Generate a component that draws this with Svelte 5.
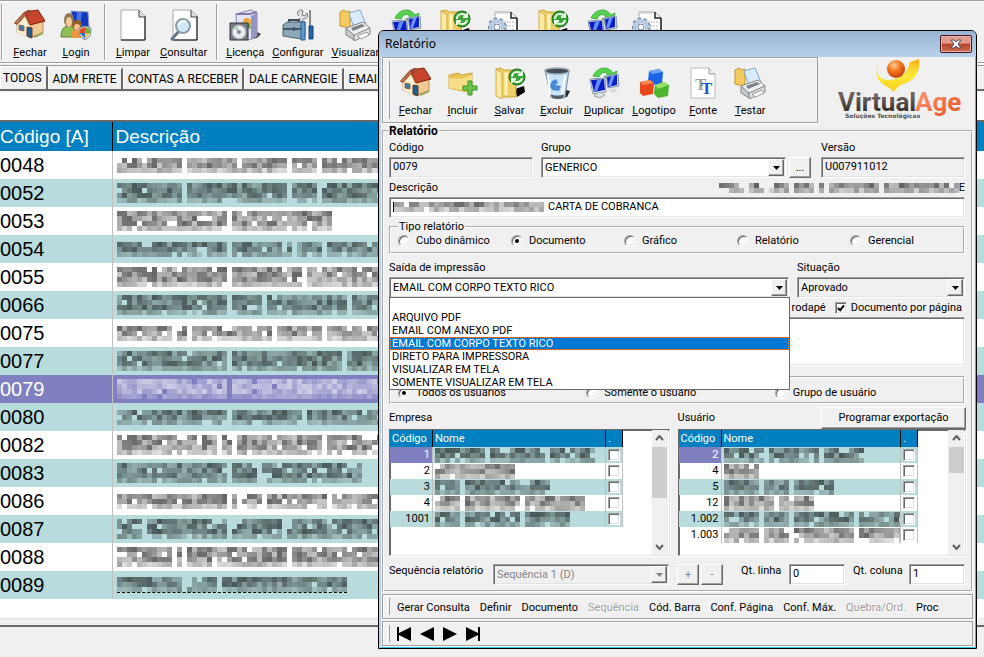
<script lang="ts">
	type Tool = { icon: string; label?: string; wide?: boolean };
	type Row = { code: string; words: number[] };

	const mainTools: Tool[][] = [
		[
			{ icon: 'house', label: 'Fechar' },
			{ icon: 'users', label: 'Login' }
		],
		[
			{ icon: 'page', label: 'Limpar' },
			{ icon: 'search', label: 'Consultar' }
		],
		[
			{ icon: 'package', label: 'Licença' },
			{ icon: 'toolbox', label: 'Configurar' },
			{ icon: 'printer', label: 'Visualizar' },
			{ icon: 'sync' },
			{ icon: 'folder', wide: true },
			{ icon: 'gear' },
			{ icon: 'folder', wide: true },
			{ icon: 'sync' },
			{ icon: 'gear' }
		]
	];

	const dialogTools: Tool[] = [
		{ icon: 'house', label: 'Fechar' },
		{ icon: 'add', label: 'Incluir' },
		{ icon: 'folder', label: 'Salvar' },
		{ icon: 'trash', label: 'Excluir' },
		{ icon: 'sync', label: 'Duplicar' },
		{ icon: 'cubes', label: 'Logotipo' },
		{ icon: 'font', label: 'Fonte' },
		{ icon: 'printer', label: 'Testar' }
	];

	const tabs = ['TODOS', 'ADM FRETE', 'CONTAS A RECEBER', 'DALE CARNEGIE', 'EMAIL'];

	// words holds the length of each masked word, in mosaic cells
	const reports: Row[] = [
		{ code: '0048', words: [13, 20, 5, 14] },
		{ code: '0052', words: [13, 20, 5, 14] },
		{ code: '0053', words: [22, 20] },
		{ code: '0054', words: [22, 12, 5, 13] },
		{ code: '0055', words: [22, 14, 16] },
		{ code: '0066', words: [22, 6, 16, 8] },
		{ code: '0075', words: [11, 2, 16, 9, 12] },
		{ code: '0077', words: [22, 22, 8] },
		{ code: '0079', words: [22, 31] },
		{ code: '0080', words: [22, 14, 16] },
		{ code: '0082', words: [20, 2, 17, 12] },
		{ code: '0083', words: [22, 5, 20] },
		{ code: '0086', words: [22, 6, 12, 12] },
		{ code: '0087', words: [5, 16, 10, 21] },
		{ code: '0088', words: [11, 1, 20, 19] },
		{ code: '0089', words: [13, 6, 25] }
	];

	const companies: Row[] = [
		{ code: '1', words: [10, 11, 9] },
		{ code: '2', words: [16] },
		{ code: '3', words: [5, 17] },
		{ code: '4', words: [5, 11, 12] },
		{ code: '1001', words: [5, 11, 9] }
	];

	const users: Row[] = [
		{ code: '2', words: [8, 10, 8] },
		{ code: '4', words: [7] },
		{ code: '5', words: [7, 5, 8] },
		{ code: '12', words: [10, 7] },
		{ code: '1.002', words: [7, 5, 12, 10] },
		{ code: '1.003', words: [7, 5, 12, 10] }
	];

	const outputs = [
		'',
		'ARQUIVO PDF',
		'EMAIL COM ANEXO PDF',
		'EMAIL COM CORPO TEXTO RICO',
		'DIRETO PARA IMPRESSORA',
		'VISUALIZAR EM TELA',
		'SOMENTE VISUALIZAR EM TELA'
	];

	const kinds = ['Cubo dinâmico', 'Documento', 'Gráfico', 'Relatório', 'Gerencial'];
	const scopes = ['Todos os usuários', 'Somente o usuário', 'Grupo de usuário'];

	const actions = [
		{ label: 'Gerar Consulta' },
		{ label: 'Definir' },
		{ label: 'Documento' },
		{ label: 'Sequência', disabled: true },
		{ label: 'Cód. Barra' },
		{ label: 'Conf. Página' },
		{ label: 'Conf. Máx.' },
		{ label: 'Quebra/Ord.', disabled: true },
		{ label: 'Proc' }
	];

	const moves = [
		{ label: 'Primeiro', path: 'M0 0h2v6L14 0v14L2 8v6H0z' },
		{ label: 'Anterior', path: 'M14 0v14L0 7z' },
		{ label: 'Próximo', path: 'M0 0v14l14-7z' },
		{ label: 'Último', path: 'M14 0h-2v6L0 0v14l12-6v6h2z' }
	];

	let output = $state('EMAIL COM CORPO TEXTO RICO');
	let kind = $state('Documento');
	let scope = $state('Todos os usuários');

	const noise = (n: number) => {
		const v = Math.sin(n * 12.9898) * 43758.5453;
		return v - Math.floor(v);
	};

	function mosaicCells(words: number[], rows: number, seed: number) {
		const cells: { x: number; y: number; o: number }[] = [];
		let col = 0;
		for (const length of words) {
			for (let i = 0; i < length; i++, col++) {
				for (let r = 0; r < rows; r++) {
					const n = noise(seed * 97 + col * 7 + r * 31 + 1);
					const edge = r === rows - 1 ? 0.6 : 1;
					cells.push({ x: col * 5, y: r * 5, o: n < 0.08 ? 0 : (0.18 + n * 0.42) * edge });
				}
			}
			col++;
		}
		return { cells, width: (col - 1) * 5 };
	}
</script>

{#snippet mosaic(words: number[], rows: number, seed: number)}
	{@const m = mosaicCells(words, rows, seed)}
	<svg class="mosaic" width={m.width} height={rows * 5} shape-rendering="crispEdges" aria-hidden="true">
		{#each m.cells as c}
			<rect x={c.x} y={c.y} width="5" height="5" fill="currentColor" opacity={c.o} />
		{/each}
	</svg>
{/snippet}

{#snippet icon(name: string)}
	<svg width="32" height="32" viewBox="0 0 32 32" aria-hidden="true">
		{#if name === 'house'}
			<path d="M3 14 11 4 15 13v15L3 23z" fill="#fbe3bd" stroke="#a9814f" stroke-width=".8" />
			<path d="M14 14 29 12v12l-14 5z" fill="#f1c993" stroke="#a9814f" stroke-width=".8" />
			<path d="M3 14 12 5l4 9-2 14L3 23z" fill="#fff0d4" />
			<path d="M11 3 24 1l7 11-15 4z" fill="#c8442a" stroke="#7d2413" />
			<path d="m11 3-10 11 2 1 8-9 5 10" fill="none" stroke="#a95330" stroke-width="1.6" />
			<path d="M13 1h4v5h-4z" fill="#a34a35" />
			<path d="M13 18l5 1v10l-5-2z" fill="#245f92" stroke="#5d3920" />
			<path d="M5 16l5 1v5l-5-1z" fill="#417ba4" stroke="#8b6b45" />
			<path d="m20 28 9-4" stroke="#9aa35e" stroke-width="2" />
		{:else if name === 'users'}
			<path d="M11 2l17 1 1 16-15 2z" fill="#1439c0" stroke="#8b9bc4" />
			<path d="m17 3 5 0-2 16h-4z" fill="#6c9cf2" opacity=".6" />
			<path d="M1 28c0-8 3-11 8-11s7 4 7 11z" fill="#8fbd53" stroke="#608232" />
			<ellipse cx="9" cy="11" rx="5" ry="7" fill="#8d7951" />
			<ellipse cx="9" cy="13" rx="3" ry="5" fill="#f5c99b" />
			<path d="M11 29c0-6 2-9 7-9s6 3 6 9z" fill="#ef973f" />
			<circle cx="17" cy="16" r="5" fill="#985c25" />
			<circle cx="17" cy="18" r="3" fill="#f7c18f" />
			<path d="M25 17l6 2c0 6-1 9-6 12-5-3-6-6-6-12z" fill="#e9edf1" stroke="#778596" />
			<path d="M20 20l5-2v6h-5z" fill="#dd4b2d" />
			<path d="M25 18l5 2v4h-5z" fill="#6eb132" />
			<path d="M20 24h5v6z" fill="#2c72cf" />
			<path d="M25 24h5l-5 6z" fill="#f5c930" />
		{:else if name === 'page'}
			<path d="M4 1h18l6 6v24H4z" fill="#fff" stroke="#aaa" />
			<path d="M28 7v24H4" fill="none" stroke="#000" />
			<path d="M22 1v7h6" fill="#ddd" stroke="#444" />
		{:else if name === 'search'}
			<path d="M5 1h18l6 6v24H5z" fill="#fff" stroke="#aaa" />
			<path d="M29 7v24H5" fill="none" stroke="#000" />
			<path d="M23 1v7h6" fill="#ddd" stroke="#444" />
			<path d="m11 22-7 8" stroke="#657487" stroke-width="3" stroke-linecap="round" />
			<circle cx="15" cy="17" r="7" fill="#cfe9fb" stroke="#8a9aac" stroke-width="2" />
			<path d="M11 16c1-4 5-5 7-3" fill="none" stroke="#fff" stroke-width="2" />
		{:else if name === 'package'}
			<path d="m28 23 4 2-4 4-7 1z" fill="#3a3a42" />
			<path d="m7 5 15-4 6 3v23l-8 4L8 28z" fill="#e4e4f4" stroke="#8585ab" />
			<path d="m22 7 6-3v23l-6 4z" fill="#9696c4" />
			<path d="M7 5h14l7-2" fill="none" stroke="#7d7da8" stroke-width="2" />
			<circle cx="18" cy="13" r="4" fill="#f1a63a" />
			<path d="m14 17 7-3 1 6z" fill="#5aa443" />
			<path d="M1 14h18v17H1z" fill="#787c84" stroke="#303238" />
			<circle cx="10" cy="23" r="7" fill="#e9ecee" stroke="#a0a4aa" />
			<path d="M10 23 4 19l4-3z" fill="#abd6ba" />
			<circle cx="10" cy="23" r="2" fill="#888" />
		{:else if name === 'toolbox'}
			<path d="M17 7c-4-4 1-8 4-5l-1 4 3 1 2-3c2 5-2 6-4 6l-4 8-4-2 5-7" fill="#dfe0e3" stroke="#777" />
			<path d="M28 1v16" stroke="#888" stroke-width="2" />
			<path d="M7 15v-4h10v4" fill="none" stroke="#424d58" stroke-width="2" />
			<path d="m1 16 4-3h18v15l-4 2-18-3z" fill="#8da7b9" stroke="#4d6475" />
			<path d="M1 20h20M12 18v4" stroke="#405465" stroke-width="2" />
			<path d="M19 13h4v18h-4z" fill="#5f9bd0" stroke="#305b86" />
			<path d="M27 17h4v13h-4z" fill="#2766a5" stroke="#174672" />
		{:else if name === 'printer'}
			<path d="m1 3 4-2 3 2 3-1v17l-10-2z" fill="#f6cb5d" stroke="#c39535" />
			<path d="M10 4 21 1l6 14-12 4z" fill="#d7edff" stroke="#88a6c5" />
			<path d="m7 19 17-6 7 6-16 8z" fill="#eceef0" stroke="#808489" />
			<path d="m7 19 8 7v5l-8-5z" fill="#c4c9cd" stroke="#888" />
			<path d="m15 26 16-7v6l-16 7z" fill="#dfe2e4" stroke="#888" />
			<path d="m12 19 11-4 3 2-12 5z" fill="#7b8187" />
			<path d="m18 27 10-4 2 3-8 4z" fill="#fff" stroke="#999" />
		{:else if name === 'sync'}
			<path d="M5 9C9 0 20-2 25 6l4-2-3 10-10-4 4-2c-3-4-7-3-9 2z" fill="#55d34f" stroke="#35a333" stroke-width=".8" />
			<path d="m18 9 12-2 1 12-11 2z" fill="#d7dee7" stroke="#8795a6" />
			<path d="m19 10 10-2v10l-9 2z" fill="#0b1fcc" />
			<path d="m23 9 4-1-4 11h-3z" fill="#6b92ff" />
			<path d="m25 21 5 2-5 3-4-2z" fill="#d3dae0" />
			<path d="m2 12 15-1 1 14-13 2z" fill="#e6edf4" stroke="#8795a6" />
			<path d="m3 13 13-1 1 11-11 2z" fill="#0a1cc4" />
			<path d="m9 13 5-1-5 12H6z" fill="#638dff" />
			<path d="m9 26 4-1 4 3-5 3-6-2z" fill="#dae1e6" stroke="#9aa5ae" />
		{:else if name === 'folder'}
			<path d="m21 22 9-3 1 6-8 5z" fill="#000" />
			<path d="m2 2 5-1 3 2h12v27H8z" fill="#efcf65" stroke="#c7a33a" />
			<path d="M2 2v27l6 3V6z" fill="#fbeaa1" stroke="#d0ae48" />
			<path d="M12 5v23" stroke="#fff4be" stroke-width="3" />
			<circle cx="23" cy="10" r="8" fill="#3aa536" stroke="#176b1b" />
			<path d="M18 10c0-6 7-6 9-3m1-3v4h-4M28 11c-1 5-7 5-9 2m-1 3v-4h4" fill="none" stroke="#e9ffe5" stroke-width="2" />
		{:else if name === 'gear'}
			<path d="M7 3h16l6 6v23H7z" fill="#fff" stroke="#aaa" />
			<path d="M29 9v23M23 3v6h6" fill="none" stroke="#222" stroke-width="1.5" />
			<path d="M9 4h13M15 13h12M18 17h9M18 21h9" stroke="#aab5c3" stroke-dasharray="2 1" />
			<circle cx="9" cy="18" r="7" fill="none" stroke="#7793b1" stroke-width="5" stroke-dasharray="3 2" />
			<circle cx="9" cy="18" r="6" fill="none" stroke="#b4cbe0" stroke-width="4" />
			<circle cx="9" cy="18" r="3" fill="#fff" stroke="#6b87a7" />
		{:else if name === 'add'}
			<path d="m2 8 10-2 2 2 11-2v20L2 21z" fill="#e8c455" stroke="#d0a83c" />
			<path d="m2 11 12 1 11-4v17L2 21z" fill="#f7df86" />
			<path d="M21 14h4v5h5v4h-5v5h-4v-5h-5v-4h5z" fill="#67c54a" stroke="#38912b" />
		{:else if name === 'trash'}
			<path d="m25 23 4 1-3 6-9 1z" fill="#222" />
			<path d="m4 3 24 0-4 27c-3 2-11 2-14 0z" fill="#c8e2f7" stroke="#6c87a2" />
			<ellipse cx="16" cy="4" rx="12" ry="3" fill="#434c57" stroke="#9baab9" stroke-width="1.5" />
			<path d="m7 8 2 20M24 8l-3 20" stroke="#fff" stroke-width="2" />
			<path d="m11 14 4-2 2 4-3 2 6 1-2 5-7-1-2-4z" fill="#4889d4" />
			<path d="M10 27c3 2 9 2 13 0l-1 4c-3 1-8 1-11 0z" fill="#555f69" />
		{:else if name === 'cubes'}
			<path d="m11 4 10-2 4 3-1 12-11 1-3-3z" fill="#1a62e6" />
			<path d="m11 4 10-2 4 3-11 2z" fill="#6ba5ff" />
			<path d="m2 15 10-2 4 3-1 11-10 2-3-3z" fill="#e9461d" />
			<path d="m2 15 10-2 4 3-11 2z" fill="#ff8a52" />
			<path d="m17 18 9-3 5 3-1 11-10 2-4-4z" fill="#4bb52c" />
			<path d="m17 18 9-3 5 3-11 4z" fill="#97e369" />
		{:else}
			<path d="M4 1h18l6 6v24H4z" fill="#fff" stroke="#bbb" />
			<path d="M22 1v6h6" fill="#eee" stroke="#999" />
			<text class="glyph" x="8" y="23" fill="#a0a0a0">T</text>
			<text class="glyph" x="14" y="27" fill="#2355c4">T</text>
		{/if}
	</svg>
{/snippet}

{#snippet toolButton(tool: Tool)}
	<button class="tool" class:tool--wide={tool.wide} aria-label={tool.label ?? tool.icon}>
		{@render icon(tool.icon)}
		{#if tool.label}
			<span><u>{tool.label[0]}</u>{tool.label.slice(1)}</span>
		{/if}
	</button>
{/snippet}

{#snippet arrow()}
	<span class="arrow" aria-hidden="true">
		<svg width="7" height="4" viewBox="0 0 7 4"><path d="M0 0h7L3.500 4z" fill="currentColor" /></svg>
	</span>
{/snippet}

{#snippet listGrid(title: string, rows: Row[], seed: number)}
	<div class="list">
		<table class="list__table" aria-label={title}>
			<thead>
				<tr><th class="list__code">Código</th><th>Nome</th><th class="list__check">.</th></tr>
			</thead>
			<tbody>
				{#each rows as row, i}
					<tr>
						<td class="list__code" class:selected={i === 0}>{row.code}</td>
						<td>{@render mosaic(row.words, 3, seed + i)}</td>
						<td class="list__check"><input type="checkbox" aria-label={`${title} ${row.code}`} /></td>
					</tr>
				{/each}
			</tbody>
		</table>
		<div class="scroll" class:scroll--short={rows.length > 5} aria-hidden="true">
			<svg width="9" height="6" viewBox="0 0 9 6"><path d="m1 5 3.500-4L8 5" /></svg>
			<i></i>
			<svg width="9" height="6" viewBox="0 0 9 6"><path d="m1 1 3.500 4L8 1" /></svg>
		</div>
	</div>
{/snippet}

<main class="desktop">
	<div class="toolbar" role="toolbar" aria-label="Principal">
		{#each mainTools as group}
			<div class="toolbar__group">
				{#each group as tool}{@render toolButton(tool)}{/each}
			</div>
		{/each}
	</div>

	<div class="tabs" role="tablist">
		{#each tabs as tab, i}
			<button class="tab" class:tab--active={i === 0} role="tab" aria-selected={i === 0}>{tab}</button>
		{/each}
	</div>

	<div class="sheet">
		<table class="reports">
			<thead>
				<tr><th class="reports__code">Código [A]</th><th>Descrição</th></tr>
			</thead>
			<tbody>
				{#each reports as row, i}
					<tr class:selected={row.code === '0079'}>
						<td class="reports__code">{row.code}</td>
						<td class:cut={i === reports.length - 1}>{@render mosaic(row.words, i % 3 === 0 ? 3 : 4, i + 1)}</td>
					</tr>
				{/each}
			</tbody>
		</table>
	</div>
</main>

<div class="window" role="dialog" aria-labelledby="window-title">
	<header class="titlebar">
		<h1 id="window-title">Relatório</h1>
		<button class="close" aria-label="Sair">
			<svg width="12" height="10" viewBox="0 0 12 10">
				<path d="M1 1h3l2 2 2-2h3L8 5l3 4H8L6 7 4 9H1l3-4z" fill="#fff" stroke="#4d4f5d" />
			</svg>
		</button>
	</header>

	<div class="top">
		<div class="panel top__tools" role="toolbar" aria-label="Relatório">
			<i class="grip"></i>
			{#each dialogTools as tool}{@render toolButton(tool)}{/each}
		</div>
		<svg class="brand" width="150" height="65" viewBox="4 0 150 65" role="img" aria-label="VirtualAge">
			<defs>
				<radialGradient id="ball" cx=".4" cy=".3" r=".7">
					<stop offset="0" stop-color="#ffd29a" />
					<stop offset=".45" stop-color="#f47b20" />
					<stop offset="1" stop-color="#c53d08" />
				</radialGradient>
				<linearGradient id="swoosh" x2="0" y2="1">
					<stop offset="0" stop-color="#f9b21b" />
					<stop offset=".5" stop-color="#ffe93b" />
					<stop offset="1" stop-color="#f6cf1c" />
				</linearGradient>
				<linearGradient id="age" x2="1" y2="1">
					<stop offset="0" stop-color="#ff9f84" />
					<stop offset="1" stop-color="#e8521a" />
				</linearGradient>
				<linearGradient id="virtual" x2="0" y2="1">
					<stop offset=".3" stop-color="#6d6260" />
					<stop offset="1" stop-color="#231d1c" />
				</linearGradient>
			</defs>
			<path d="M60 8c-4 8 0 15 9 15 12 0 19-6 22-18l9-3c2 13-5 21-13 24-6 2-9 4-12 9-4-5-13-7-16-13-2-5-2-10 1-14z" fill="url(#swoosh)" />
			<circle cx="77" cy="12" r="9" fill="url(#ball)" />
			<text x="19" y="54" class="brand__name" fill="url(#virtual)">Virtual</text>
			<text x="96" y="54" class="brand__name" fill="url(#age)">Age</text>
			<text x="26" y="61" class="brand__tag">Soluções Tecnológicas</text>
		</svg>
	</div>

	<fieldset class="group form">
		<legend><b>Relatório</b></legend>

		<div class="row">
			<div class="field w144">
				<label for="code">Código</label>
				<input id="code" class="box box--flat" value="0079" readonly />
			</div>
			<div class="field grow">
				<label for="group">Grupo</label>
				<div class="pick">
					<div class="combo grow">
						<select id="group" class="box"><option>GENERICO</option></select>
						{@render arrow()}
					</div>
					<button class="btn btn--small">...</button>
				</div>
			</div>
			<div class="field w144">
				<label for="version">Versão</label>
				<input id="version" class="box box--flat" value="U007911012" readonly />
			</div>
		</div>

		<div class="field">
			<div class="caption">
				<label for="description">Descrição</label>
				<span class="caption__path">{@render mosaic([5, 8, 4, 1, 10, 15], 2, 40)}E</span>
			</div>
			<div class="masked">
				<input id="description" class="box" value="CARTA DE COBRANCA" />
				<span class="masked__start">{@render mosaic([30], 2, 53)}</span>
			</div>
		</div>

		<fieldset class="group radios radios--kind">
			<legend>Tipo relatório</legend>
			{#each kinds as k}
				<label><input type="radio" name="kind" value={k} bind:group={kind} />{k}</label>
			{/each}
		</fieldset>

		<div class="row outputs">
			<div class="field grow">
				<label for="output">Saída de impressão</label>
				<div class="combo">
					<select id="output" class="box" bind:value={output}>
						{#each outputs as o}<option>{o}</option>{/each}
					</select>
					{@render arrow()}
					<ul class="menu" role="listbox" aria-label="Saída de impressão">
						{#each outputs as o}
							<li role="option" aria-selected={o === output} class:current={o === output}>{o}</li>
						{/each}
					</ul>
				</div>
			</div>
			<div class="field w168">
				<label for="status">Situação</label>
				<div class="combo">
					<select id="status" class="box box--flat"><option>Aprovado</option></select>
					{@render arrow()}
				</div>
			</div>
		</div>

		<div class="checks">
			<label><input type="checkbox" />Imprimir rodapé</label>
			<label><input type="checkbox" checked />Documento por página</label>
		</div>

		<textarea class="box memo" aria-label="Observação"></textarea>

		<fieldset class="group radios radios--scope" aria-label="Usuários">
			{#each scopes as s}
				<label><input type="radio" name="scope" value={s} bind:group={scope} />{s}</label>
			{/each}
		</fieldset>

		<div class="lists">
			<section>
				<div class="lists__head">Empresa</div>
				{@render listGrid('Empresa', companies, 60)}
			</section>
			<section>
				<div class="lists__head">Usuário <button class="btn btn--export">Programar exportação</button></div>
				{@render listGrid('Usuário', users, 80)}
			</section>
		</div>

		<div class="sequence">
			<label for="sequence">Sequência relatório</label>
			<div class="combo combo--off">
				<select id="sequence" class="box box--flat" disabled><option>Sequência 1 (D)</option></select>
				{@render arrow()}
			</div>
			<div class="sequence__buttons">
				<button class="btn btn--small" disabled>+</button>
				<button class="btn btn--small" disabled>-</button>
			</div>
			<label for="lines">Qt. linha</label>
			<input id="lines" class="box" value="0" />
			<label class="sequence__next" for="columns">Qt. coluna</label>
			<input id="columns" class="box" value="1" />
		</div>
	</fieldset>

	<div class="panel actions">
		<i class="grip"></i>
		{#each actions as a}
			<button disabled={a.disabled}>{a.label}</button>
		{/each}
	</div>
	<div class="panel moves">
		<i class="grip"></i>
		{#each moves as m}
			<button aria-label={m.label}>
				<svg width="14" height="14" viewBox="0 0 14 14"><path d={m.path} /></svg>
			</button>
		{/each}
	</div>
</div>

<style>
	:global(body) {
		--face: #f0f0f0;
		--shade: #a0a0a0;
		--dark: #696969;
		--light: #e3e3e3;
		--teal: #b8dcdc;
		--blue: #0080c0;
		--violet: #8080c0;
		background: var(--face);
		font: 11px/14px Roboto, 'Liberation Sans', sans-serif;
		color: #000;
		overflow: hidden;
	}

	:global(#app) {
		position: relative;
		min-height: 100vh;
	}

	button,
	input,
	select,
	textarea {
		font: inherit;
		color: inherit;
		margin: 0;
	}

	button {
		padding: 0;
		border: 0;
		background: none;
		white-space: nowrap;
	}

	.mosaic {
		display: block;
		flex: none;
	}

	.glyph {
		font: 700 17px 'Liberation Serif', serif;
	}

	.toolbar {
		display: flex;
		height: 61px;
		border-top: 1px solid var(--shade);
		border-bottom: 1px solid var(--shade);
		box-shadow: inset 0 1px #fff, 0 1px #fff;
		overflow: hidden;
	}

	.toolbar__group {
		display: flex;
		flex: none;
		margin: 3px 0 2px;
		padding: 5px 5px 0;
		border-left: 1px solid var(--shade);
		box-shadow: inset 1px 0 #fff;
	}

	.toolbar__group:first-child {
		margin-left: 1px;
	}

	.tool {
		display: flex;
		flex-direction: column;
		align-items: center;
		flex: none;
		gap: 5px;
		min-width: 46px;
		padding: 0 4px;
	}

	.tool--wide {
		min-width: 52px;
	}

	.tabs {
		display: flex;
		align-items: flex-end;
		height: 23px;
		margin-top: 2px;
		border-top: 1px solid var(--shade);
		border-bottom: 2px solid var(--dark);
		overflow: hidden;
	}

	.tab {
		height: 21px;
		padding: 0 4px;
		border-left: 1px solid #fff;
		border-top: 1px solid #fff;
		border-right: 2px solid var(--dark);
		font-size: 12px;
	}

	.tab--active {
		height: 23px;
		padding-left: 2px;
	}

	.sheet {
		height: 505px;
		margin-top: 1px;
		padding-top: 28px;
		background: #fff;
		border-bottom: 2px solid var(--dark);
		box-shadow: inset 0 -6px var(--face), inset 0 -7px var(--light);
	}

	.reports {
		width: 100%;
		table-layout: fixed;
		border-collapse: collapse;
		border-top: 2px solid var(--dark);
		font: 20px/28px 'Liberation Sans', sans-serif;
	}

	.reports th {
		height: 29px;
		padding: 0 0 0 3px;
		background: var(--blue);
		color: #fff;
		font-weight: normal;
		font-size: 19px;
		text-align: left;
	}

	.reports td {
		height: 28px;
		padding: 0 0 0 4px;
		overflow: hidden;
	}

	.reports .reports__code {
		width: 112px;
		box-sizing: border-box;
		padding-left: 0;
		border-right: 1px solid silver;
	}

	.reports th.reports__code {
		border-color: #000;
	}

	.reports tbody tr:nth-child(even),
	.list tbody tr:nth-child(odd) {
		background: var(--teal);
	}

	.reports tbody tr.selected,
	.list td.selected {
		background: var(--violet);
		color: #fff;
	}

	.cut .mosaic {
		border-bottom: 1px dashed #000;
	}

	.window {
		position: absolute;
		top: 30px;
		left: 378px;
		right: 7px;
		border: 1px solid #000;
		border-radius: 6px 6px 0 0;
		background: var(--face);
		box-shadow: inset 2px 0 #b9d1ea, inset -1px -1px #2fc5ea;
		padding: 0 3px 2px;
	}

	.titlebar {
		display: flex;
		align-items: center;
		justify-content: space-between;
		height: 26px;
		margin: 0 -3px;
		padding: 0 4px 0 6px;
		border-radius: 5px 5px 0 0;
		background: linear-gradient(#98b4d2, #b9d1ea);
	}

	.titlebar h1 {
		margin: 0;
		font: 12px/16px 'Noto Sans', sans-serif;
	}

	.close {
		display: grid;
		place-items: center;
		width: 32px;
		height: 18px;
		border: 1px solid #431422;
		border-radius: 2px;
		background: linear-gradient(#e09b8d 45%, #b8422b 50%, #cf6d51);
		box-shadow: inset 0 0 0 1px #e8b3a8;
	}

	.top {
		display: flex;
		justify-content: space-between;
		height: 67px;
	}

	.panel {
		display: flex;
		border: 1px solid var(--shade);
		box-shadow: inset 1px 1px #fff, 0 1px #fff;
	}

	.top__tools {
		flex: 0 1 430px;
		height: 64px;
		padding-left: 4px;
		align-items: flex-start;
	}

	.top__tools .tool {
		min-width: 47px;
		padding: 9px 4px 0;
	}

	.grip {
		flex: none;
		width: 1px;
		margin: 3px 2px 3px 0;
		border-right: 1px solid var(--shade);
		border-left: 1px solid #fff;
		align-self: stretch;
	}

	.brand {
		flex: none;
	}

	.brand__name {
		font: 700 26px Roboto, sans-serif;
	}

	.brand__tag {
		font: 700 6px 'DejaVu Sans', sans-serif;
		fill: #555;
	}

	.group {
		min-width: 0;
		margin: 0;
		border: 2px groove #fff;
	}

	.group legend {
		padding: 0 1px;
	}

	.form {
		display: flex;
		flex-direction: column;
		padding: 3px 6px 5px 5px;
	}

	.form > legend {
		margin-left: -1px;
		font-size: 12px;
	}

	.row,
	.pick,
	.lists {
		display: flex;
		gap: 8px;
	}

	.row {
		margin-bottom: 3px;
	}

	.pick {
		gap: 3px;
		margin-right: 2px;
	}

	.field {
		display: flex;
		flex-direction: column;
		gap: 2px;
	}

	.grow {
		flex: 1;
		min-width: 0;
	}

	.w144 {
		width: 144px;
	}

	.w168 {
		width: 168px;
	}

	.box {
		display: block;
		box-sizing: border-box;
		width: 100%;
		height: 21px;
		padding: 0 3px 2px;
		border: 1px solid;
		border-color: var(--shade) #fff #fff var(--shade);
		border-radius: 0;
		outline: 0;
		background: #fff;
		box-shadow: inset 1px 1px var(--dark), inset -1px -1px var(--light);
		appearance: none;
	}

	.box--flat {
		background: var(--face);
	}

	select.box {
		padding: 0 3px;
		color: #000;
		opacity: 1;
	}

	.combo {
		position: relative;
	}

	.arrow {
		position: absolute;
		top: 2px;
		right: 2px;
		bottom: 2px;
		display: grid;
		place-items: center;
		width: 14px;
		pointer-events: none;
	}

	.arrow,
	.btn {
		background: var(--face);
		border: 1px solid;
		border-color: #fff var(--dark) var(--dark) #fff;
		box-shadow: inset -1px -1px var(--shade);
	}

	.combo--off,
	.combo--off select.box,
	.btn:disabled {
		color: #848484;
	}

	.btn--small {
		width: 22px;
		height: 21px;
	}

	.caption {
		display: flex;
		justify-content: space-between;
	}

	.caption__path {
		display: flex;
		align-items: center;
	}

	.masked {
		position: relative;
	}

	.masked .box {
		padding-left: 158px;
	}

	.masked__start {
		position: absolute;
		top: 5px;
		left: 4px;
		border-left: 1px solid #000;
	}

	.radios {
		display: flex;
		align-items: center;
		padding: 0 0 0 7px;
	}

	.radios label {
		display: flex;
		align-items: center;
		gap: 6px;
	}

	.radios--kind {
		height: 30px;
		margin: 2px 0 7px;
	}

	.radios--kind label {
		width: 113px;
	}

	.radios--scope {
		height: 16px;
		margin-top: 10px;
		padding-top: 8px;
	}

	.radios--scope label {
		width: 189px;
	}

	input[type='radio'],
	input[type='checkbox'] {
		appearance: none;
		box-sizing: border-box;
		flex: none;
		display: grid;
		place-items: center;
		width: 12px;
		height: 12px;
		border: 1px solid;
		border-color: var(--shade) #fff #fff var(--shade);
		background: #fff;
		box-shadow: inset 1px 1px var(--dark), inset -1px -1px var(--light);
	}

	input[type='radio'] {
		border-radius: 50%;
	}

	input[type='radio']:checked::before {
		content: '';
		width: 4px;
		height: 4px;
		border-radius: 50%;
		background: #000;
	}

	input[type='checkbox']:checked::before {
		content: '';
		width: 2px;
		height: 5px;
		margin-bottom: 2px;
		border: solid #000;
		border-width: 0 2px 2px 0;
		transform: rotate(40deg);
	}

	.menu {
		position: absolute;
		z-index: 1;
		top: 20px;
		left: 0;
		right: -1px;
		margin: 0;
		padding: 0;
		border: 1px solid var(--dark);
		background: #fff;
		list-style: none;
	}

	.menu li {
		height: 13px;
		padding-left: 2px;
		line-height: 13px;
	}

	.menu .current {
		background: #0078d7;
		color: #fff;
		outline: 1px dotted #ff8728;
		outline-offset: -1px;
	}

	.checks {
		display: flex;
		justify-content: flex-end;
		gap: 9px;
		margin-bottom: 2px;
		padding-right: 3px;
	}

	.checks label {
		display: flex;
		align-items: center;
		gap: 4px;
	}

	.memo {
		height: 49px;
		resize: none;
	}

	.lists {
		margin: 3px -1px 8px 0;
	}

	.lists section {
		flex: 280;
	}

	.lists section + section {
		flex: 288;
	}

	.lists__head {
		display: flex;
		align-items: center;
		justify-content: space-between;
		height: 22px;
	}

	.btn--export {
		width: 145px;
		height: 22px;
	}

	.list {
		display: flex;
		justify-content: space-between;
		height: 125px;
		padding: 0 1px 0 0;
		background: #fff;
		border: 1px solid;
		border-color: var(--dark) var(--light) var(--light) var(--dark);
		box-shadow: 0 1px #fff, 1px 0 #fff, inset 1px 1px var(--dark);
	}

	.list__table {
		flex: none;
		width: 84%;
		align-self: flex-start;
		table-layout: fixed;
		border-collapse: collapse;
	}

	.list th {
		height: 17px;
		padding: 0 2px;
		border-right: 1px solid #000;
		background: var(--blue);
		color: #fff;
		font-weight: normal;
		text-align: left;
	}

	.list td {
		height: 16px;
		padding: 0 2px;
		border-right: 1px solid silver;
		overflow: hidden;
		line-height: 16px;
	}

	.list .list__code {
		width: 38px;
	}

	.list td.list__code {
		text-align: right;
	}

	.list .list__check {
		width: 12px;
	}

	.scroll {
		display: flex;
		flex-direction: column;
		align-items: center;
		justify-content: space-between;
		width: 16px;
		padding: 5px 0;
		background: var(--face);
	}

	.scroll path {
		fill: none;
		stroke: #606060;
		stroke-width: 2;
	}

	.scroll i {
		width: 15px;
		height: 51px;
		margin: 6px 0 auto;
		background: #cdcdcd;
	}

	.scroll--short i {
		height: 26px;
	}

	.sequence {
		display: grid;
		grid-template-columns: 104px 1fr 72px 48px 56px 64px 56px;
	}

	.sequence__buttons {
		display: flex;
		gap: 2px;
		padding-left: 8px;
	}

	.sequence label {
		white-space: nowrap;
	}

	.sequence .sequence__next {
		padding-left: 8px;
	}

	.actions,
	.moves {
		align-items: center;
		height: 23px;
		margin-top: 2px;
		padding-left: 4px;
	}

	.actions button {
		margin: 3px 5px 0;
	}

	.actions button:disabled {
		color: var(--shade);
		text-shadow: 1px 1px #fff;
	}

	.moves button {
		width: 23px;
		height: 14px;
	}

	.moves svg {
		display: block;
		margin: auto;
	}
</style>
